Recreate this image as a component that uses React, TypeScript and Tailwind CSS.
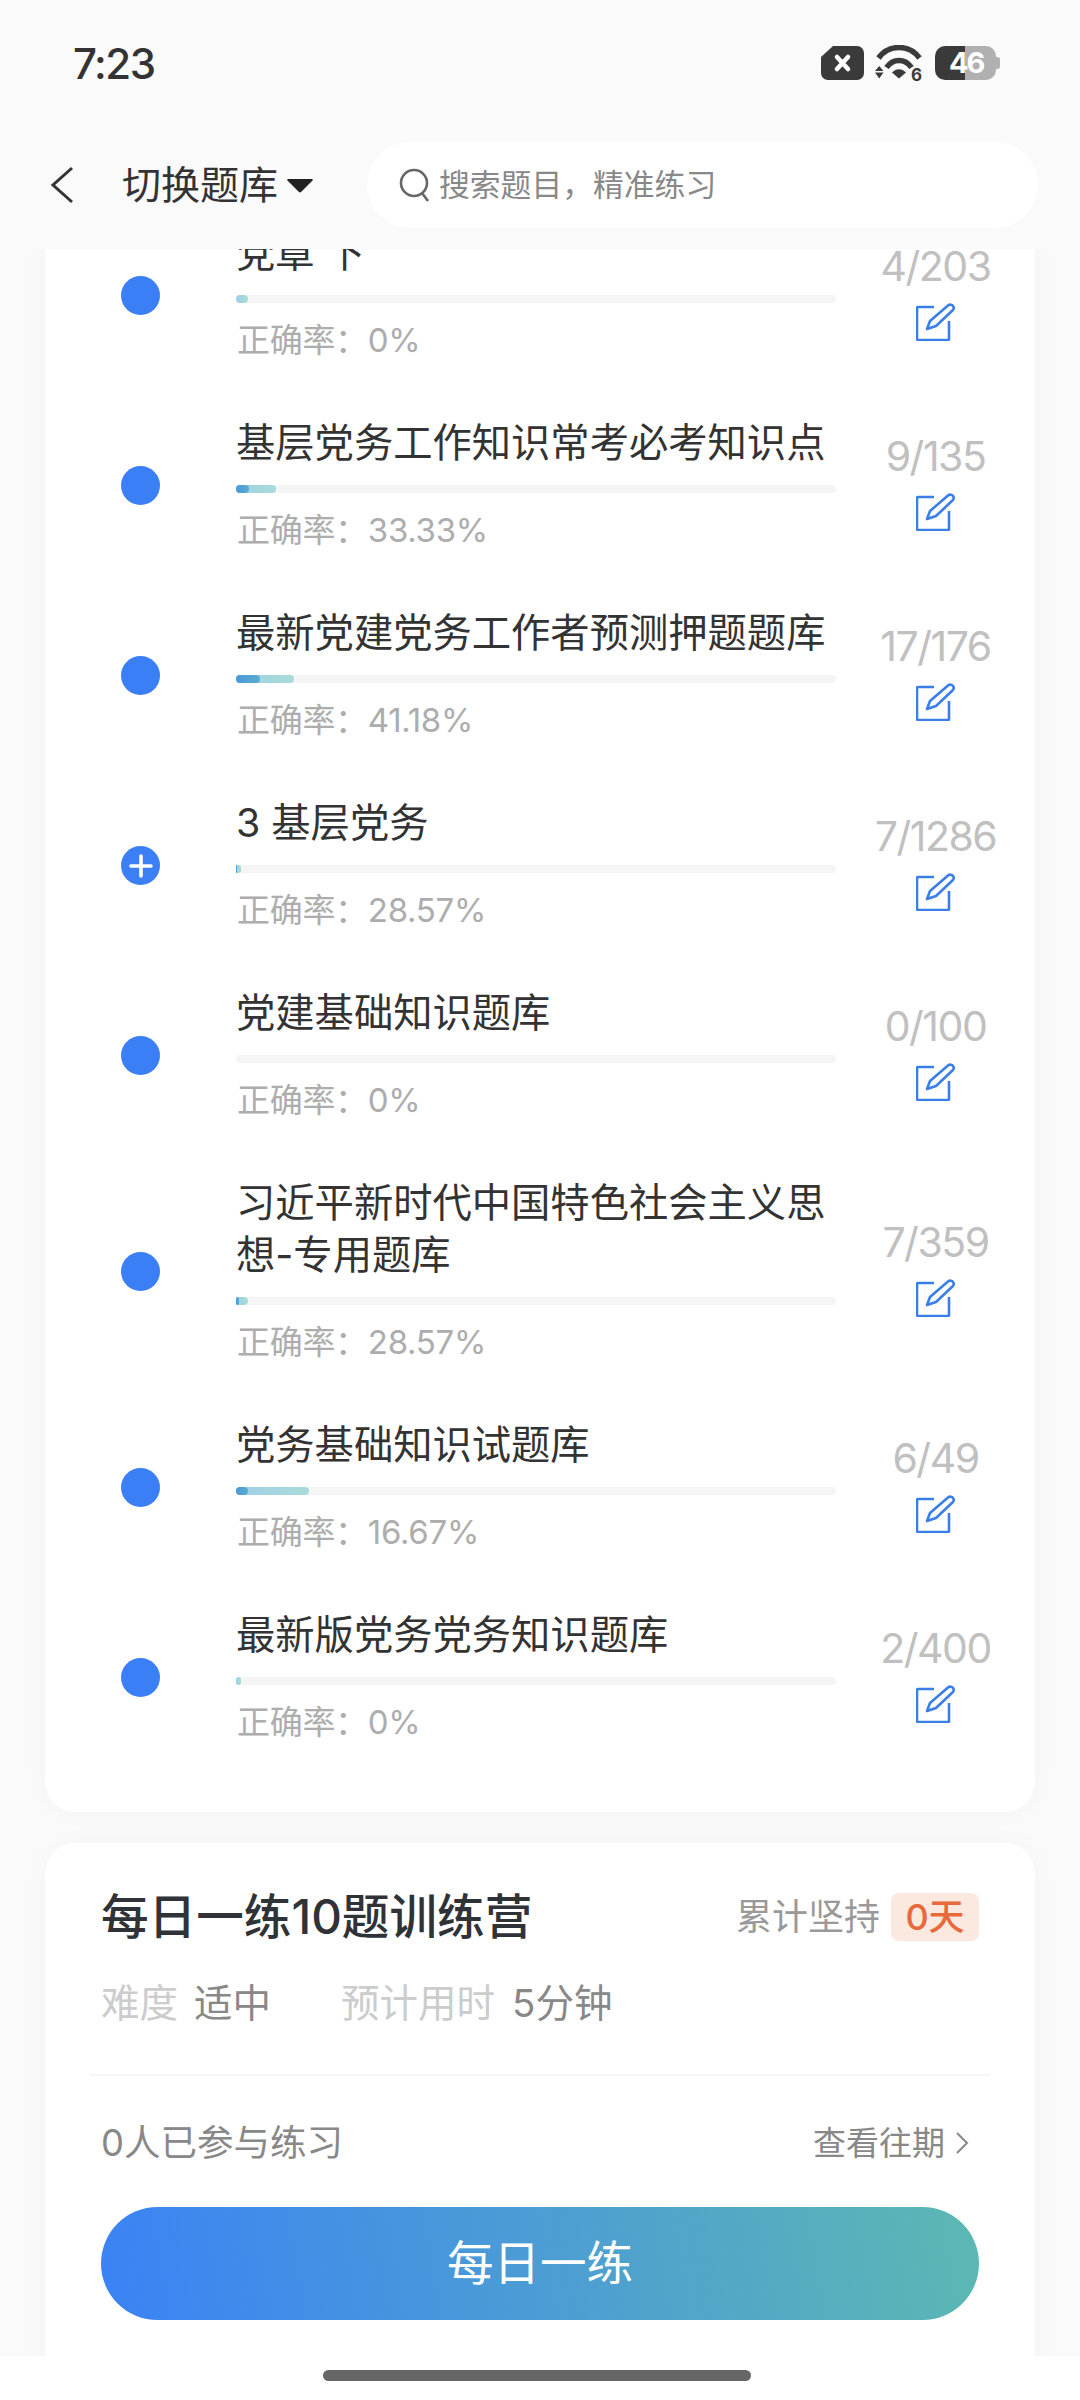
const banks = [
  { title: "党章 下", done: 4, total: 203, rate: 0 },
  { title: "基层党务工作知识常考必考知识点", done: 9, total: 135, rate: 33.33 },
  { title: "最新党建党务工作者预测押题题库", done: 17, total: 176, rate: 41.18 },
  { title: "3 基层党务", done: 7, total: 1286, rate: 28.57, open: true },
  { title: "党建基础知识题库", done: 0, total: 100, rate: 0 },
  { title: "习近平新时代中国特色社会主义思想-专用题库", done: 7, total: 359, rate: 28.57 },
  { title: "党务基础知识试题库", done: 6, total: 49, rate: 16.67 },
  { title: "最新版党务党务知识题库", done: 2, total: 400, rate: 0 },
];

function StatusIcons() {
  return (
    <div className="flex items-center">
      <svg width="43" height="34" viewBox="0 0 43 34">
        <path d="M12 0h24a7 7 0 0 1 7 7v20a7 7 0 0 1-7 7H7a7 7 0 0 1-7-7V11z" fill="#3a3a3a" />
        <path d="M16 11l11 12M27 11L16 23" stroke="#fff" strokeWidth="4.500" strokeLinecap="round" />
      </svg>
      <svg className="ml-[11px] mt-[5px]" width="48" height="42" viewBox="0 0 48 42">
        <path d="M3.500 13C14 -1 34 -1 44.500 13" fill="none" stroke="#3a3a3a" strokeWidth="5.500" />
        <path d="M11.500 22.500C18 13 30 13 36.500 22.500" fill="none" stroke="#3a3a3a" strokeWidth="5.500" />
        <path d="M17 27.500c4-4.500 10-4.500 14 0l-7 6z" fill="#3a3a3a" />
        <path d="M0 26h8.500L4.200 21zM0 27.500h8.500L4.200 33.500z" fill="#3a3a3a" />
        <text x="36" y="36" fontSize="17" fontWeight="700" fill="#3a3a3a" fontFamily="Inter">6</text>
      </svg>
      <div className="relative ml-[12px] flex h-[34px] w-[65px]">
        <div className="w-[30px] rounded-l-[10px] bg-[#3a3a3a]" />
        <div className="w-[31px] rounded-r-[10px] bg-[#b0b0b0]" />
        <div className="my-auto h-[12px] w-[4px] rounded-r-[3px] bg-[#b0b0b0]" />
        <span className="absolute left-[14px] top-0 text-[29px] leading-[34px] font-bold tracking-[-2px] text-white">46</span>
      </div>
    </div>
  );
}

function PencilIcon() {
  return (
    <svg width="40" height="38" viewBox="0 0 40 38" fill="none" stroke="#3b7fe6" strokeWidth="2.600" strokeLinejoin="round">
      <path d="M18 4H2a1 1 0 0 0-1 1v31a1 1 0 0 0 1 1h30a1 1 0 0 0 1-1V18" />
      <path d="M11 26l3-8L32 2.500c1.500-1.300 4-1 5 .5 1 1.300.8 3-.3 4.200L20 23z" />
    </svg>
  );
}

function ProgressBar({ done, total, rate }: { done: number; total: number; rate: number }) {
  const light = done === 0 ? 0 : Math.max((done / total) * 600, 5);
  const dark = (light * rate) / 100;
  return (
    <div className="relative mt-[14px] h-[8px] w-[600px] rounded-full bg-[#f5f5f5]">
      <div
        className="absolute left-0 top-0 h-full rounded-full bg-gradient-to-r from-[#a0cfe8] to-[#a8dcd8]"
        style={{ width: light }}
      />
      <div
        className="absolute left-0 top-0 h-full rounded-full bg-gradient-to-r from-[#4a98dc] to-[#5aaccc]"
        style={{ width: dark }}
      />
    </div>
  );
}

function BankRow({ bank }: { bank: (typeof banks)[number] }) {
  return (
    <div className="flex items-center">
      <div className="ml-[76px] flex h-[39px] w-[39px] shrink-0 items-center justify-center rounded-full bg-[#3b7ff6]">
        {bank.open && (
          <svg width="24" height="24" viewBox="0 0 24 24" stroke="#fff" strokeWidth="3.600" strokeLinecap="round">
            <path d="M2 12h20M12 2v20" />
          </svg>
        )}
      </div>
      <div className="ml-[76px] w-[600px] shrink-0">
        <div className="-translate-y-[2px] text-[39.3px] leading-[52px] text-[#333333]">{bank.title}</div>
        <ProgressBar done={bank.done} total={bank.total} rate={bank.rate} />
        <div className="mt-[15px] pl-px text-[33px] leading-[44px] tracking-[-0.3px] text-[#adadad]">正确率：{bank.rate === 0 ? "0" : bank.rate}%</div>
      </div>
      <div className="flex flex-1 flex-col items-center pb-[9px]">
        <div className="text-[41px] leading-[50px] tracking-[-1.5px] text-[#c0c0c0]">{bank.done}/{bank.total}</div>
        <div className="mt-[12px]"><PencilIcon /></div>
      </div>
    </div>
  );
}

function DailyCard() {
  return (
    <div className="mt-[31px] h-[560px] rounded-[30px] bg-white px-[56px] pt-[44px] shadow-[0_0_24px_rgba(0,0,0,0.03)]">
      <div className="flex items-center justify-between">
        <div className="text-[47.6px] leading-[60px] font-medium text-[#2f3338]">每日一练10题训练营</div>
        <div className="flex items-center">
          <span className="text-[36px] text-[#999999]">累计坚持</span>
          <span className="ml-[11px] flex h-[48px] w-[88px] items-center justify-center rounded-[8px] bg-[#fbe9df] text-[36px] font-medium text-[#e8693a]">0天</span>
        </div>
      </div>
      <div className="mt-[31px] flex text-[38.5px] leading-[50px]">
        <span className="text-[#cccccc]">难度</span>
        <span className="ml-[16px] text-[#888888]">适中</span>
        <span className="ml-[70px] text-[#cccccc]">预计用时</span>
        <span className="ml-[17px] text-[#888888]">5分钟</span>
      </div>
      <div className="-mx-[11px] mt-[46px] h-[2px] bg-[#f6f6f6]" />
      <div className="mt-[42px] flex items-center justify-between leading-[50px] text-[#888888]">
        <span className="text-[36.5px]">0人已参与练习</span>
        <span className="flex items-center text-[33px]">
          查看往期
          <svg className="ml-[10px] mr-[9px]" width="15" height="24" viewBox="0 0 15 24" fill="none" stroke="#888888" strokeWidth="2">
            <path d="M2 2l10 10L2 22" />
          </svg>
        </span>
      </div>
      <div className="mt-[39px] flex h-[113px] items-center justify-center rounded-full bg-[linear-gradient(80deg,#3b82f6,#5cb8b2)] text-[46.500px] text-white">
        每日一练
      </div>
    </div>
  );
}

export default function App() {
  return (
    <div className="relative flex h-[2400px] w-[1080px] flex-col overflow-hidden bg-[#fafafa] font-['Inter','Noto_Sans_CJK_SC',sans-serif]">
      <header className="z-10 h-[249px] shrink-0 bg-[#fafafa]">
        <div className="flex h-[126px] items-center justify-between pl-[73px] pr-[80px]">
          <span className="text-[42px] font-medium tracking-[-1.500px] text-[#333333]">7:23</span>
          <StatusIcons />
        </div>
        <div className="mt-[16px] flex h-[86px] items-center pr-[42px]">
          <svg className="ml-[50px]" width="24" height="38" viewBox="0 0 24 38" fill="none" stroke="#333333" strokeWidth="3">
            <path d="M22 2L3 19l19 17" />
          </svg>
          <span className="ml-[48px] text-[39px] text-[#333333]">切换题库</span>
          <svg className="ml-[9px]" width="26" height="15" viewBox="0 0 26 15">
            <path d="M1 1h24c1 0 1 1 .5 1.500L14 14c-.6.6-1.400.6-2 0L.5 2.500C0 2 0 1 1 1z" fill="#222222" />
          </svg>
          <div className="ml-[54px] flex h-full flex-1 items-center rounded-full bg-white pl-[32px]">
            <svg width="32" height="34" viewBox="0 0 32 34" fill="none" stroke="#666666" strokeWidth="2.600">
              <circle cx="15" cy="15" r="13" />
              <path d="M23 25l6 8" />
            </svg>
            <span className="ml-[8px] text-[30.800px] text-[#888888]">搜索题目，精准练习</span>
          </div>
        </div>
      </header>
      <main className="min-h-0 flex-1 overflow-hidden px-[45px]">
        <div className="-mt-[40px] rounded-[30px] bg-white pb-[68px] pt-[20px] shadow-[0_0_24px_rgba(0,0,0,0.03)]">
          <div className="flex flex-col gap-[57px]">
            {banks.map((bank) => (
              <BankRow key={bank.title} bank={bank} />
            ))}
          </div>
        </div>
        <DailyCard />
      </main>
      <footer className="z-10 flex h-[44px] shrink-0 justify-center bg-white pr-[6px] pt-[14px]">
        <div className="h-[11px] w-[428px] rounded-full bg-[#666666]" />
      </footer>
    </div>
  );
}
